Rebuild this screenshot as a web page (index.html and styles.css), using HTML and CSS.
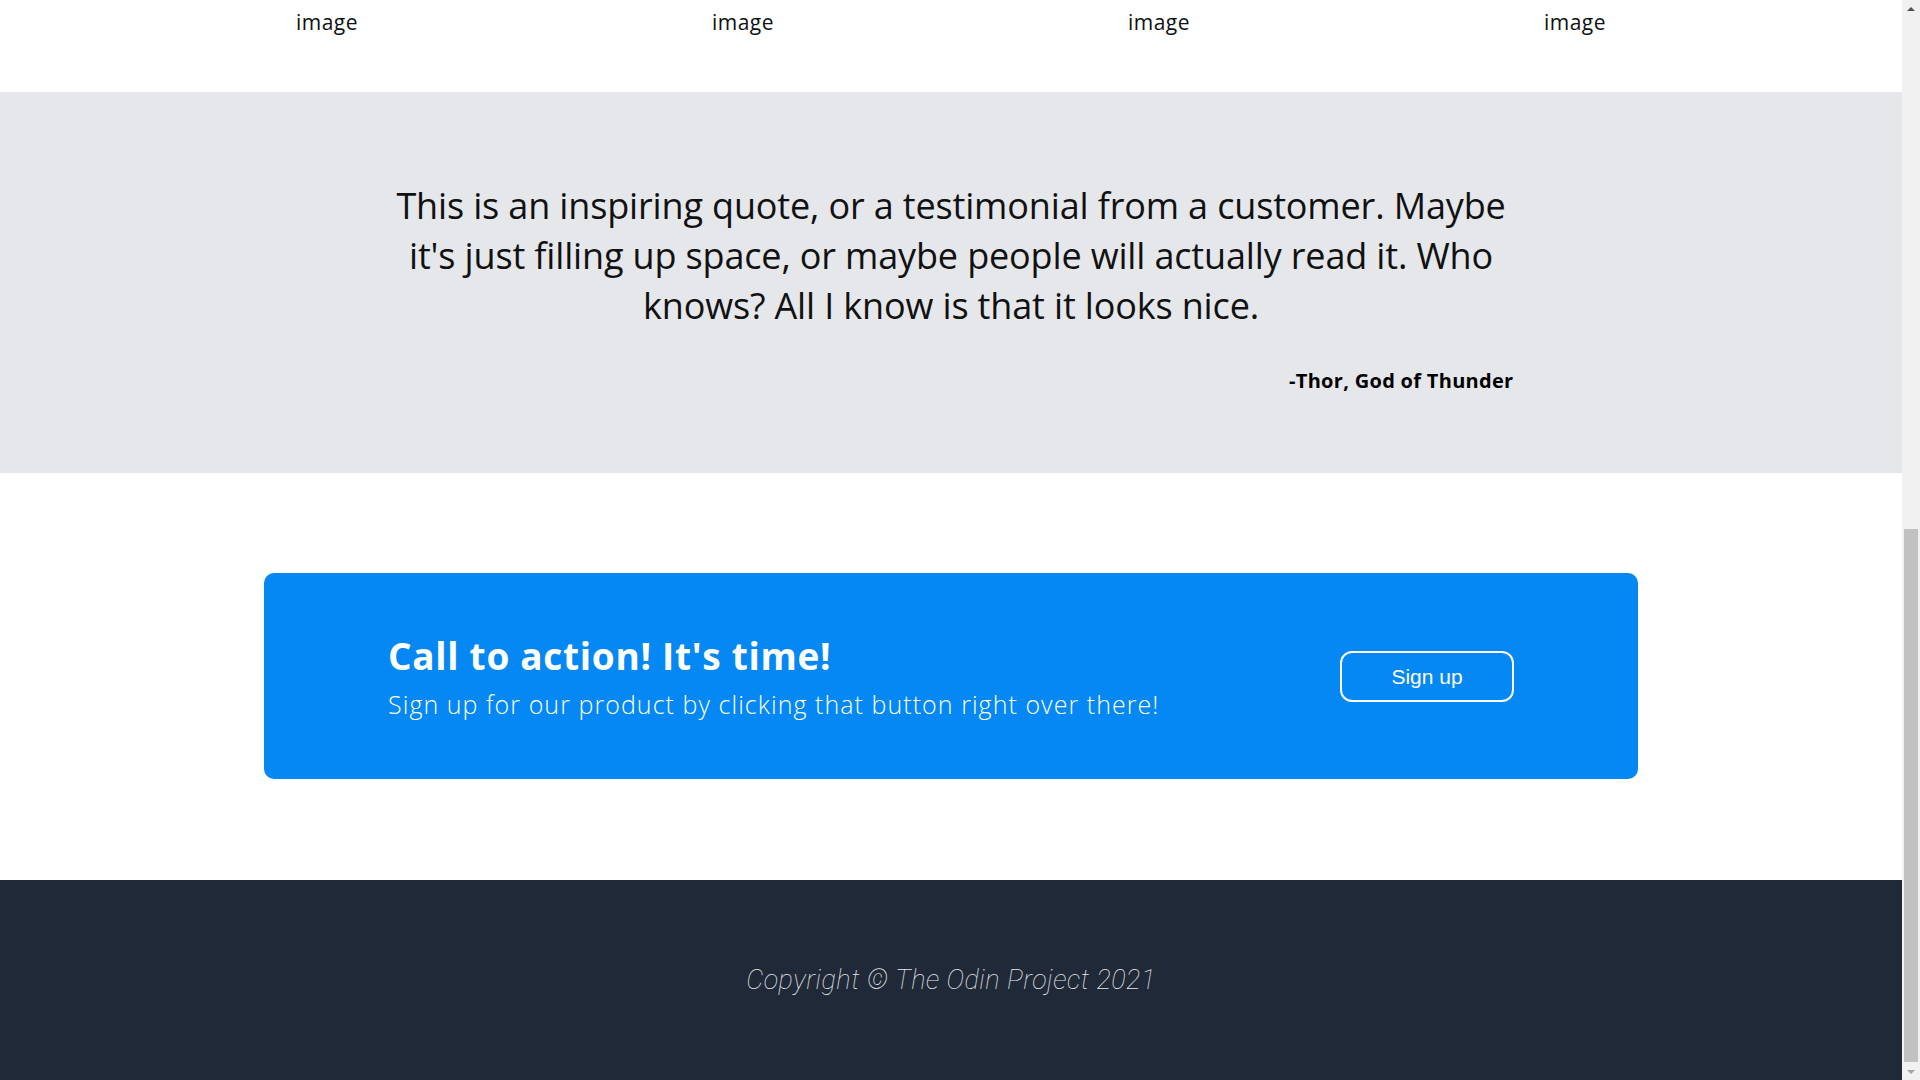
FILE: index.html
```html
<!DOCTYPE html>
<html lang="en">
<head>
<meta charset="utf-8">
<title>The Odin Project - Landing Page</title>
<link rel="stylesheet" href="styles.css">
</head>
<body>
<div class="page">
  <section class="info">
    <div class="cards">
      <p class="caption">image</p>
      <p class="caption">image</p>
      <p class="caption">image</p>
      <p class="caption">image</p>
    </div>
  </section>

  <section class="quote-section">
    <div class="quote-wrap">
      <p class="quote">This is an inspiring quote, or a testimonial from a customer. Maybe it's just filling up space, or maybe people will actually read it. Who knows? All I know is that it looks nice.</p>
      <p class="author">-Thor, God of Thunder</p>
    </div>
  </section>

  <section class="cta-section">
    <div class="cta">
      <div class="cta-text">
        <h2 class="cta-title">Call to action! It's time!</h2>
        <p class="cta-sub">Sign up for our product by clicking that button right over there!</p>
      </div>
      <button class="cta-btn">Sign up</button>
    </div>
  </section>

  <footer class="footer">
    <p class="copyright">Copyright © The Odin Project 2021</p>
  </footer>
</div>

<div class="scrollbar" aria-hidden="true">
  <div class="sb-btn"><span class="arrow-up"></span></div>
  <div class="sb-track"><div class="sb-thumb"></div></div>
  <div class="sb-btn"><span class="arrow-down"></span></div>
</div>
</body>
</html>
```

FILE: styles.css
```css
body {
  margin: 0;
  display: flex;
  height: 100vh;
  overflow: hidden;
  font-family: "Open Sans", "DejaVu Sans", sans-serif;
  color: #111;
}

.page {
  flex: 1;
  min-width: 0;
}

/* ---------- image captions ---------- */
.info {
  background: #fff;
  padding: 7px 0 55px;
}

.cards {
  display: grid;
  grid-template-columns: repeat(4, 416px);
  justify-content: center;
}

.caption {
  margin: 0;
  text-align: center;
  font-size: 21px;
  line-height: 30px;
  letter-spacing: 0.5px;
  color: #111;
}

/* ---------- quote ---------- */
.quote-section {
  background: #e5e7eb;
  padding: 89px 0 77px;
}

.quote-wrap {
  width: 1125px;
  margin: 0 auto;
}

.quote {
  margin: 0;
  font-size: 36px;
  line-height: 50px;
  letter-spacing: -0.15px;
  text-align: center;
  color: #111;
}

.author {
  margin: 35px 0 0;
  font-size: 20px;
  line-height: 30px;
  font-weight: 700;
  letter-spacing: 0.3px;
  text-align: right;
  color: #000;
}

/* ---------- call to action ---------- */
.cta-section {
  background: #fff;
  padding: 100px 0 101px;
}

.cta {
  width: 1374px;
  box-sizing: border-box;
  margin: 0 auto;
  padding: 59px 124px 51px;
  background: #0588f4;
  border-radius: 10px;
  display: flex;
  justify-content: space-between;
  align-items: center;
  color: #fff;
}

.cta-title {
  margin: 0;
  font-size: 37px;
  line-height: 48px;
  font-weight: 700;
  letter-spacing: 0.7px;
}

.cta-sub {
  margin: 0;
  font-size: 25px;
  line-height: 48px;
  font-weight: 300;
  letter-spacing: 1.05px;
}

.cta-btn {
  width: 174px;
  height: 51px;
  margin-bottom: 7px;
  border: 2px solid #fff;
  border-radius: 12px;
  background: transparent;
  color: #fff;
  font-family: "Liberation Sans", Arial, sans-serif;
  font-size: 21px;
}

/* ---------- footer ---------- */
.footer {
  background: #1f2937;
  padding: 80px 0;
}

.copyright {
  margin: 0;
  text-align: center;
  font-family: "Roboto", "Open Sans", sans-serif;
  font-style: italic;
  font-weight: 100;
  font-size: 27px;
  line-height: 40px;
  letter-spacing: 0.5px;
  color: #e5e7eb;
}

/* ---------- window scrollbar ---------- */
.scrollbar {
  flex: none;
  width: 18px;
  height: 100vh;
  background: #f1f1f1;
  display: flex;
  flex-direction: column;
}

.sb-btn {
  height: 17px;
  display: flex;
  align-items: center;
  justify-content: center;
}

.arrow-up {
  width: 0;
  height: 0;
  border-left: 4px solid transparent;
  border-right: 4px solid transparent;
  border-bottom: 4px solid #505050;
}

.arrow-down {
  width: 0;
  height: 0;
  border-left: 4px solid transparent;
  border-right: 4px solid transparent;
  border-top: 4px solid #a3a3a3;
}

.sb-track {
  flex: 1;
  display: flex;
  flex-direction: column;
  justify-content: flex-end;
}

.sb-thumb {
  height: 533px;
  margin: 0 2px 1px;
  background: #c1c1c1;
}
```
